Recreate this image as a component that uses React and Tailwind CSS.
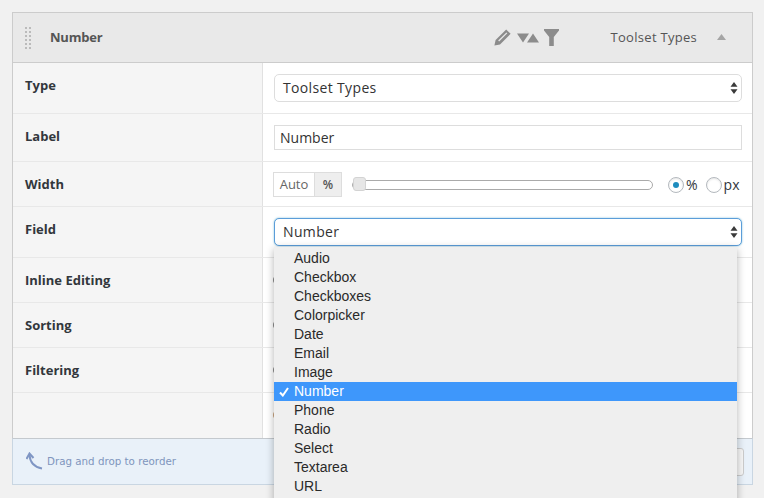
const rows = [
  { label: "Type", height: "h-[51px]", pad: "pt-[14px]" },
  { label: "Label", height: "h-[48px]", pad: "pt-[14px]" },
  { label: "Width", height: "h-[45px]", pad: "pt-[14px]" },
  { label: "Field", height: "h-[51px]", pad: "pt-[14px]" },
  { label: "Inline Editing", height: "h-[45px]", pad: "pt-[14px]", sliver: "bg-[#8a8a8a]" },
  { label: "Sorting", height: "h-[45px]", pad: "pt-[14px]", sliver: "bg-[#8a8a8a]" },
  { label: "Filtering", height: "h-[45px]", pad: "pt-[14px]", sliver: "bg-[#8a8a8a]" },
  { label: "", height: "h-[45px]", pad: "pt-[14px]", sliver: "bg-[#c9a27c]" },
];

const options = ["Audio", "Checkbox", "Checkboxes", "Colorpicker", "Date", "Email", "Image", "Number", "Phone", "Radio", "Select", "Textarea", "URL"];

const SelectArrows = () => (
  <svg width="8" height="12" viewBox="0 0 8 12" className="text-[#3a3a3a]">
    <path d="M4 0 L7.5 4.8 H0.5 Z M4 12 L7.5 7.2 H0.5 Z" fill="currentColor" />
  </svg>
);

const SelectBox = ({ value, focused }) => (
  <div
    className={`flex h-[28px] w-[468px] items-center justify-between rounded-[5px] border bg-white pl-[8px] pr-[3px] text-[14px] leading-[24px] tracking-[0.35px] text-[#333] ${
      focused ? "border-[#5b9dd9] shadow-[0_0_2px_rgba(30,140,190,0.6)]" : "border-[#ddd]"
    }`}
  >
    <span>{value}</span>
    <SelectArrows />
  </div>
);

const Radio = ({ checked }) => (
  <span className="flex h-[16px] w-[16px] items-center justify-center rounded-full border border-[#b4b9be] bg-white shadow-[inset_0_1px_2px_rgba(0,0,0,0.1)]">
    {checked && <span className="h-[6px] w-[6px] rounded-full bg-[#1e8cbe]" />}
  </span>
);

export default function App() {
  return (
    <div className="relative h-[498px] w-[764px] overflow-hidden bg-[#f1f1f1] pl-[12px] pt-[12px] font-['Open_Sans',sans-serif] text-[#32373c]">
      <div className="w-[741px]">
        <div className="border-x border-t border-[#ccc]">
          <div className="flex h-[50px] items-center border-b border-[#ccc] bg-[#e9e9e9]">
            <div className="ml-[12px] grid grid-cols-2 gap-x-[2px] gap-y-[2px]">
              {Array.from({ length: 12 }).map((_, i) => (
                <span key={i} className="h-[2px] w-[2px] bg-[#bbb]" />
              ))}
            </div>
            <span className="ml-[19px] pt-[1px] text-[13px] font-bold tracking-[-0.2px] text-[#555]">Number</span>
            <div className="ml-[391px] flex items-center text-[#8c8c8c]">
              <svg width="17" height="17" viewBox="0 0 17 17">
                <path d="M12.2.4 16.6 4.8 6 15.4 .4 16.6 1.6 11Z M12.4 3.4 4.2 11.6 5.1 12.5 13.3 4.3Z" fill="currentColor" fillRule="evenodd" />
              </svg>
              <svg width="22" height="10" viewBox="0 0 22 10" className="ml-[6px]">
                <path d="M0 .5H12L6 9.5Z M10 9.5H22L16 .5Z" fill="currentColor" />
              </svg>
              <svg width="15" height="17" viewBox="0 0 15 17" className="ml-[5px]">
                <path d="M0 0H15V1.5L9.8 8V17H5.2V8L0 1.5Z" fill="currentColor" />
              </svg>
            </div>
            <span className="ml-[52px] text-[13px] tracking-[0.3px] text-[#555]">Toolset Types</span>
            <svg width="9" height="6" viewBox="0 0 9 6" className="ml-[20px] mb-[1px] text-[#a5a5a5]">
              <path d="M4.5 0 9 6H0Z" fill="currentColor" />
            </svg>
          </div>
          <div className="relative flex flex-col bg-white">
            {rows.map((row) => (
              <div key={row.label} className={`flex ${row.height} border-b border-[#e8e8e8] last:border-b-0`}>
                <div className={`w-[250px] border-r border-[#e1e1e1] bg-[#f5f5f5] pl-[12px] ${row.pad} text-[13px] leading-[16px] font-bold text-[#32373c]`}>
                  {row.label}
                </div>
                <div className="flex-1 pl-[11px]">
                  {row.label === "Type" && (
                    <div className="pt-[11px]">
                      <SelectBox value="Toolset Types" />
                    </div>
                  )}
                  {row.label === "Label" && (
                    <div className="pt-[11px]">
                      <div className="flex h-[25px] w-[468px] items-center border border-[#ddd] pl-[5px] text-[14px] text-[#333]">Number</div>
                    </div>
                  )}
                  {row.label === "Width" && (
                    <div className="-ml-[1px] flex items-center pt-[10px]">
                      <div className="flex h-[25px] border border-[#ddd] text-[13px] leading-[23px]">
                        <span className="w-[40px] text-center text-[#666]">Auto</span>
                        <span className="w-[27px] border-l border-[#ddd] bg-[#eee] text-center text-[12px] font-semibold text-[#555]">%</span>
                      </div>
                      <div className="relative ml-[10px] h-[10px] w-[301px] rounded-full border border-[#aaa] bg-white">
                        <span className="absolute top-[-4px] left-[0px] h-[14px] w-[13px] rounded-[3px] border border-[#d3d3d3] bg-[#e6e6e6]" />
                      </div>
                      <div className="ml-[15px]"><Radio checked /></div>
                      <span className="ml-[2px] text-[14px]">%</span>
                      <div className="ml-[8px]"><Radio /></div>
                      <span className="ml-[2px] text-[14px]">px</span>
                    </div>
                  )}
                  {row.label === "Field" && (
                    <div className="pt-[11px]">
                      <SelectBox value="Number" focused />
                    </div>
                  )}
                  {row.sliver && (
                    <div className="-ml-[1px] pt-[18px]">
                      <div className={`h-[8px] w-[8px] rounded-full ${row.sliver}`} />
                    </div>
                  )}
                </div>
              </div>
            ))}
          </div>
        </div>
        <div className="flex h-[47px] items-center border border-t-[#c4c9ce] border-x-[#c9d6e2] border-b-[#c9d6e2] bg-[#e9f1f9] pl-[13px] text-[#7f95bd]">
          <svg width="17" height="20" viewBox="0 0 17 20" fill="none" stroke="#7f96c4" strokeWidth="2">
            <path d="M3.5 3C4 10 8 15 16 16.5" />
            <path d="M0.5 7 3.5 1.5 7.5 6" />
          </svg>
          <span className="ml-[4px] font-['DejaVu_Sans',sans-serif] text-[10.3px]">Drag and drop to reorder</span>
          <div className="ml-auto mr-[8px] h-[28px] w-[10px] rounded-r-[3px] border border-[#ccc] bg-[#f7f7f7]" />
        </div>
      </div>
      <div className="absolute top-[247px] left-[274px] w-[463px] bg-[#efefef] pt-[2px] pb-[20px] shadow-[0_2px_8px_rgba(0,0,0,0.3)] font-['Liberation_Sans',sans-serif] text-[14px] leading-[19px] text-[#2a2a2a]">
        {options.map((name) => (
          <div key={name} className={`relative h-[19px] pl-[20px] ${name === "Number" ? "bg-[#3e97fb] text-white" : ""}`}>
            {name === "Number" && (
              <svg width="10" height="10" viewBox="0 0 10 10" className="absolute top-[5px] left-[5px]" fill="none" stroke="white" strokeWidth="2">
                <path d="M1 5.5 3.8 8.5 9 1" />
              </svg>
            )}
            {name}
          </div>
        ))}
      </div>
    </div>
  );
}
